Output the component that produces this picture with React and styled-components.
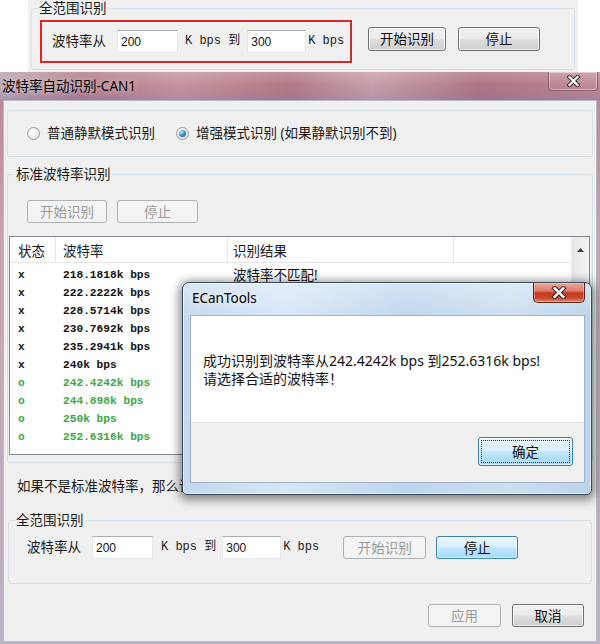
import React from "react";
import styled, { createGlobalStyle, css } from "styled-components";

const ui = `"Noto Sans", "Noto Sans CJK SC", sans-serif`;
const mono = `"Liberation Mono", "Noto Sans CJK SC", monospace`;

const GlobalStyle = createGlobalStyle`
  html, body {
    margin: 0;
    padding: 0;
    background: #ffffff;
  }
  body {
    font-family: ${ui};
    font-size: 13.5px;
    color: #1a1a1a;
  }
`;

const Page = styled.div`
  position: relative;
  width: 600px;
  height: 644px;
  overflow: hidden;
  display: flex;
  flex-direction: column;
  background: #fff;
`;

/* ---------- the cropped snapshot on top ---------- */

const Snapshot = styled.div`
  height: 72px;
  flex: none;
  padding-left: 28px;
  display: flex;
`;

const SnapPanel = styled.div`
  width: 550px;
  background: #f0f0f0;
  display: flex;
`;

const GroupBox = styled.fieldset`
  box-sizing: border-box;
  min-width: 0;
  margin: 0;
  border: 1px solid #d5dfe5;
  border-radius: 3px;
  padding: 0;
`;

const Legend = styled.legend`
  margin-left: 6px;
  padding: 0 1px;
  font-size: 13.5px;
  line-height: 17px;
  color: #1a1a1a;
`;

const TopGroup = styled(GroupBox)`
  flex: 1;
  margin: 0 3px;
  height: 70px;
  padding: 3px 0 0 0;
  display: flex;
  align-items: flex-start;
`;

const Highlight = styled.div`
  box-sizing: border-box;
  width: 312px;
  height: 43px;
  margin-left: 8px;
  border: 2px solid #d42a2a;
  padding-left: 10px;
  display: flex;
  align-items: center;
`;

const Label = styled.span`
  font-size: 13.5px;
  line-height: 17px;
  white-space: nowrap;
`;

const NumInput = styled.input`
  box-sizing: border-box;
  width: ${p => p.$w}px;
  height: 23px;
  margin: 0 0 0 ${p => p.$ml}px;
  padding: 0 3px;
  border: 1px solid #e3e9ef;
  border-top-color: #abadb3;
  background: #fff;
  font-family: "Liberation Sans", sans-serif;
  font-size: 12px;
  color: #111;
  outline: none;
`;

const Unit = styled.span`
  margin-left: ${p => p.$ml}px;
  font-family: ${mono};
  font-size: 12px;
  line-height: 17px;
  white-space: pre;
  color: #1a1a1a;
`;

const Button = styled.button`
  box-sizing: border-box;
  flex: none;
  width: ${p => p.$w}px;
  height: ${p => p.$h || 23}px;
  margin: 0 0 0 ${p => p.$ml || 0}px;
  padding: 0;
  border: 1px solid #707070;
  border-radius: 3px;
  background: linear-gradient(#f2f2f2 0%, #ebebeb 48%, #dddddd 52%, #cfcfcf 100%);
  box-shadow: inset 0 0 0 1px rgba(255, 255, 255, 0.75);
  font-family: ${ui};
  font-size: 13.5px;
  line-height: 18px;
  color: #111;
  &:disabled {
    border-color: #adb2b5;
    background: #f4f4f4;
    box-shadow: none;
    color: #9a9a9a;
  }
  ${p => p.$focus && css`
    border-color: #3c7fb1;
    background: linear-gradient(#eaf6fd 0%, #d9f0fc 48%, #bee6fd 52%, #a7d9f5 100%);
    box-shadow: inset 0 0 0 1px rgba(255, 255, 255, 0.6);
  `}
  ${p => p.$dotted && css`
    outline: 1px dotted #333;
    outline-offset: -4px;
  `}
`;

const TopButtons = styled.div`
  display: flex;
  gap: 12px;
  margin: 7px 0 0 16px;
`;

/* ---------- main window ---------- */

const Window = styled.div`
  flex: 1;
  display: flex;
  flex-direction: column;
  background: linear-gradient(to bottom, #b98592 0%, #c7a3ad 30%, #b9b2c2 100%);
`;

const TitleBar = styled.div`
  height: 28px;
  flex: none;
  display: flex;
  justify-content: space-between;
  align-items: flex-start;
  background:
    linear-gradient(to bottom, rgba(255, 255, 255, 0.18), rgba(255, 255, 255, 0) 45%, rgba(110, 100, 170, 0.22) 100%),
    linear-gradient(to right, #b9a6b1 0%, #b47b87 14%, #c7939d 30%, #b27a85 48%, #c8a0a9 62%, #ae7682 80%, #bd8893 100%);
`;

const WinTitle = styled.div`
  padding: 5px 0 0 2px;
  font-size: 13.5px;
  line-height: 18px;
  color: #000;
  text-shadow: 0 0 6px rgba(255, 255, 255, 0.85);
`;

const CaptionClose = styled.div`
  box-sizing: border-box;
  width: 50px;
  height: 19px;
  margin-right: 2px;
  border: 1px solid rgba(90, 50, 60, 0.55);
  border-top: none;
  border-radius: 0 0 4px 4px;
  box-shadow: inset 0 0 0 1px rgba(255, 255, 255, 0.4);
  background: linear-gradient(rgba(255, 255, 255, 0.12), rgba(255, 255, 255, 0.02));
  display: flex;
  align-items: center;
  justify-content: center;
`;

const Body = styled.div`
  flex: 1;
  margin: 0 3px 2px;
  padding: 9px 3px 0;
  border: 1px solid #b6bcc6;
  background: #f0f0f0;
  display: flex;
  flex-direction: column;
`;

const RadioBox = styled.div`
  box-sizing: border-box;
  height: 47px;
  flex: none;
  padding-left: 19px;
  border: 1px solid #d5dfe5;
  border-radius: 3px;
  display: flex;
  align-items: center;
  gap: 21px;
`;

const RadioItem = styled.label`
  display: flex;
  align-items: center;
  gap: 7px;
  font-size: 13.5px;
  line-height: 17px;
`;

const RadioDot = styled.span`
  box-sizing: border-box;
  width: 13px;
  height: 13px;
  border-radius: 50%;
  border: 1px solid #9a9b9b;
  background: radial-gradient(circle at 40% 35%, #ffffff 0%, #ececec 60%, #d6d6d6 100%);
  display: flex;
  align-items: center;
  justify-content: center;
  ${p => p.$on && css`
    &::after {
      content: "";
      width: 7px;
      height: 7px;
      border-radius: 50%;
      background: radial-gradient(circle at 35% 30%, #c6ecff 0%, #3b94d6 45%, #0f4c8a 100%);
    }
  `}
`;

const StdGroup = styled(GroupBox)`
  margin: 9px 0 0;
  height: 297px;
  flex: none;
  padding: 17px 2px 7px 1px;
`;

const BtnRow = styled.div`
  display: flex;
  gap: 10px;
  padding-left: 18px;
`;

const ListView = styled.div`
  box-sizing: border-box;
  height: 219px;
  margin-top: 13px;
  border: 1px solid #828790;
  background: #fff;
  display: flex;
`;

const ListMain = styled.div`
  flex: 1;
  display: flex;
  flex-direction: column;
`;

const cols = css`
  display: grid;
  grid-template-columns: 46px 172px 226px 1fr;
`;

const HeaderRow = styled.div`
  ${cols};
  height: 26px;
  border-bottom: 1px solid #e5e5e5;
  box-sizing: border-box;
`;

const HeaderCell = styled.div`
  padding: 6px 0 0 ${p => p.$pl}px;
  border-right: 1px solid #e5e5e5;
  font-size: 13.5px;
  line-height: 17px;
  color: #1a1a1a;
  &:last-child {
    border-right: none;
  }
`;

const Rows = styled.div`
  padding-top: 3px;
`;

const Row = styled.div`
  ${cols};
  height: 18px;
  color: ${p => (p.$ok ? "#3ea545" : "#111")};
`;

const MonoCell = styled.div`
  padding-left: ${p => p.$pl}px;
  font-family: ${mono};
  font-size: 11.2px;
  font-weight: bold;
  line-height: 18px;
  white-space: pre;
`;

const TextCell = styled.div`
  padding-left: 5px;
  font-size: 13.5px;
  line-height: 18px;
  color: #111;
`;

const ScrollBar = styled.div`
  width: 17px;
  flex: none;
  background: linear-gradient(to right, #e7e7e7, #f4f4f4);
  border-left: 1px solid #ededed;
`;

const ScrollUp = styled.div`
  height: 24px;
  display: flex;
  align-items: center;
  justify-content: center;
  padding-top: 2px;
  box-sizing: border-box;
`;

const Hint = styled.div`
  margin-top: 15px;
  padding-left: 10px;
  font-size: 13.5px;
  line-height: 17px;
  white-space: nowrap;
`;

const RangeGroup = styled(GroupBox)`
  margin: 17px 1px 0;
  height: 72px;
  flex: none;
  padding: 7px 0 0 0;
`;

const FieldRow = styled.div`
  display: flex;
  align-items: center;
  padding-left: 18px;
`;

const Footer = styled.div`
  display: flex;
  justify-content: flex-end;
  gap: 11px;
  margin-top: 20px;
  padding-right: 9px;
`;

/* ---------- message box on top ---------- */

const Dialog = styled.div`
  position: absolute;
  left: 182px;
  top: 282px;
  box-sizing: border-box;
  width: 410px;
  height: 213px;
  padding: 0 6px 11px 7px;
  border: 1px solid #3a4a5e;
  border-radius: 7px 7px 5px 5px;
  background:
    linear-gradient(to bottom, rgba(255, 255, 255, 0.35), rgba(255, 255, 255, 0) 18%),
    linear-gradient(to right, #c3d8ee 0%, #d6e6f7 25%, #bed5ed 55%, #cddff2 80%, #bcd3eb 100%);
  box-shadow: 0 2px 10px 3px rgba(0, 0, 0, 0.45), inset 0 0 0 1px rgba(255, 255, 255, 0.55);
  display: flex;
  flex-direction: column;
`;

const DialogHead = styled.div`
  height: 32px;
  flex: none;
  display: flex;
  justify-content: space-between;
  align-items: flex-start;
`;

const DialogTitle = styled.div`
  padding: 6px 0 0 2px;
  font-size: 13.5px;
  line-height: 18px;
  color: #000;
  text-shadow: 0 0 6px rgba(255, 255, 255, 0.9);
`;

const RedClose = styled.div`
  box-sizing: border-box;
  width: 52px;
  height: 20px;
  border: 1px solid #5e2418;
  border-top: none;
  border-radius: 0 0 5px 5px;
  background: linear-gradient(#eaa99a 0%, #dc7a65 42%, #c33a20 52%, #c8472d 78%, #e08a70 100%);
  box-shadow: inset 0 0 0 1px rgba(255, 210, 200, 0.45);
  display: flex;
  align-items: center;
  justify-content: center;
`;

const DialogClient = styled.div`
  flex: 1;
  border: 1px solid #9fb2c8;
  display: flex;
  flex-direction: column;
`;

const Message = styled.div`
  height: 106px;
  box-sizing: border-box;
  padding: 36px 0 0 12px;
  background: #fff;
  font-size: 14px;
  line-height: 18px;
  color: #111;
`;

const DialogFooter = styled.div`
  flex: 1;
  background: #f0f0f0;
  border-top: 1px solid #dfdfdf;
  display: flex;
  justify-content: flex-end;
  align-items: flex-start;
  padding: 14px 11px 0 0;
`;

const CloseX = ({ w, h }) => (
  <svg width={w} height={h} viewBox="0 0 14 12">
    <path d="M3 2 L11 10 M11 2 L3 10" stroke="#3b2a2e" strokeWidth="4.2" strokeLinecap="square" fill="none" />
    <path d="M3 2 L11 10 M11 2 L3 10" stroke="#ffffff" strokeWidth="2.2" strokeLinecap="square" fill="none" />
  </svg>
);

// only the first result is visible; the rest sit under the message box
const rows = [
  ["x", "218.1818k bps", "波特率不匹配!"],
  ["x", "222.2222k bps", ""],
  ["x", "228.5714k bps", ""],
  ["x", "230.7692k bps", ""],
  ["x", "235.2941k bps", ""],
  ["x", "240k bps", ""],
  ["o", "242.4242k bps", ""],
  ["o", "244.898k bps", ""],
  ["o", "250k bps", ""],
  ["o", "252.6316k bps", ""],
];

const App = () => {
  return (
    <>
      <GlobalStyle />
      <Page>
        <Snapshot>
          <SnapPanel>
            <TopGroup>
              <Legend>全范围识别</Legend>
              <Highlight>
                <Label>波特率从</Label>
                <NumInput $w={61} $ml={11} value="200" readOnly />
                <Unit $ml={7}>K bps 到</Unit>
                <NumInput $w={59} $ml={7} value="300" readOnly />
                <Unit $ml={2}>K bps</Unit>
              </Highlight>
              <TopButtons>
                <Button $w={78} $h={24}>开始识别</Button>
                <Button $w={82} $h={24}>停止</Button>
              </TopButtons>
            </TopGroup>
          </SnapPanel>
        </Snapshot>

        <Window>
          <TitleBar>
            <WinTitle>波特率自动识别-CAN1</WinTitle>
            <CaptionClose>
              <CloseX w={15} h={12} />
            </CaptionClose>
          </TitleBar>
          <Body>
            <RadioBox>
              <RadioItem>
                <RadioDot />
                普通静默模式识别
              </RadioItem>
              <RadioItem>
                <RadioDot $on />
                增强模式识别 (如果静默识别不到)
              </RadioItem>
            </RadioBox>

            <StdGroup>
              <Legend>标准波特率识别</Legend>
              <BtnRow>
                <Button $w={80} disabled>开始识别</Button>
                <Button $w={81} disabled>停止</Button>
              </BtnRow>
              <ListView>
                <ListMain>
                  <HeaderRow>
                    <HeaderCell $pl={8}>状态</HeaderCell>
                    <HeaderCell $pl={7}>波特率</HeaderCell>
                    <HeaderCell $pl={5}>识别结果</HeaderCell>
                    <HeaderCell $pl={0} />
                  </HeaderRow>
                  <Rows>
                    {rows.map(([s, rate, res]) => (
                      <Row key={rate} $ok={s === "o"}>
                        <MonoCell $pl={8}>{s}</MonoCell>
                        <MonoCell $pl={7}>{rate}</MonoCell>
                        <TextCell>{res}</TextCell>
                        <div />
                      </Row>
                    ))}
                  </Rows>
                </ListMain>
                <ScrollBar>
                  <ScrollUp>
                    <svg width="7" height="4" viewBox="0 0 7 4">
                      <path d="M0 4 L3.5 0 L7 4 Z" fill="#3d3d3d" />
                    </svg>
                  </ScrollUp>
                </ScrollBar>
              </ListView>
            </StdGroup>

            <Hint>如果不是标准波特率，那么请使用下面的全范围识别功能进行识别。</Hint>

            <RangeGroup>
              <Legend>全范围识别</Legend>
              <FieldRow>
                <Label>波特率从</Label>
                <NumInput $w={61} $ml={11} value="200" readOnly />
                <Unit $ml={8}>K bps 到</Unit>
                <NumInput $w={59} $ml={6} value="300" readOnly />
                <Unit $ml={2}>K bps</Unit>
                <Button $w={83} $ml={24} disabled>开始识别</Button>
                <Button $w={82} $ml={10} $focus>停止</Button>
              </FieldRow>
            </RangeGroup>

            <Footer>
              <Button $w={73} disabled>应用</Button>
              <Button $w={72}>取消</Button>
            </Footer>
          </Body>
        </Window>

        <Dialog>
          <DialogHead>
            <DialogTitle>ECanTools</DialogTitle>
            <RedClose>
              <CloseX w={16} h={13} />
            </RedClose>
          </DialogHead>
          <DialogClient>
            <Message>
              成功识别到波特率从242.4242k bps 到252.6316k bps!
              <br />
              请选择合适的波特率！
            </Message>
            <DialogFooter>
              <Button $w={95} $h={29} $focus $dotted>确定</Button>
            </DialogFooter>
          </DialogClient>
        </Dialog>
      </Page>
    </>
  );
};

export default App;
